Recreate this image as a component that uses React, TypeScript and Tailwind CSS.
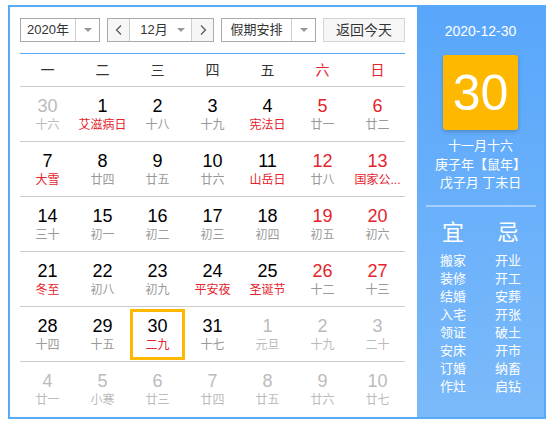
import React from 'react';

type Day = {
    n: number;
    l: string;
    off?: boolean;
    red?: boolean;
};

const rows: Day[][] = [
    [
        { n: 30, l: '十六', off: true },
        { n: 1, l: '艾滋病日', red: true },
        { n: 2, l: '十八' },
        { n: 3, l: '十九' },
        { n: 4, l: '宪法日', red: true },
        { n: 5, l: '廿一' },
        { n: 6, l: '廿二' },
    ],
    [
        { n: 7, l: '大雪', red: true },
        { n: 8, l: '廿四' },
        { n: 9, l: '廿五' },
        { n: 10, l: '廿六' },
        { n: 11, l: '山岳日', red: true },
        { n: 12, l: '廿八' },
        { n: 13, l: '国家公...', red: true },
    ],
    [
        { n: 14, l: '三十' },
        { n: 15, l: '初一' },
        { n: 16, l: '初二' },
        { n: 17, l: '初三' },
        { n: 18, l: '初四' },
        { n: 19, l: '初五' },
        { n: 20, l: '初六' },
    ],
    [
        { n: 21, l: '冬至', red: true },
        { n: 22, l: '初八' },
        { n: 23, l: '初九' },
        { n: 24, l: '平安夜', red: true },
        { n: 25, l: '圣诞节', red: true },
        { n: 26, l: '十二' },
        { n: 27, l: '十三' },
    ],
    [
        { n: 28, l: '十四' },
        { n: 29, l: '十五' },
        { n: 30, l: '二九', red: true },
        { n: 31, l: '十七' },
        { n: 1, l: '元旦', off: true },
        { n: 2, l: '十九', off: true },
        { n: 3, l: '二十', off: true },
    ],
    [
        { n: 4, l: '廿一', off: true },
        { n: 5, l: '小寒', off: true },
        { n: 6, l: '廿三', off: true },
        { n: 7, l: '廿四', off: true },
        { n: 8, l: '廿五', off: true },
        { n: 9, l: '廿六', off: true },
        { n: 10, l: '廿七', off: true },
    ],
];

const weekdays = ['一', '二', '三', '四', '五', '六', '日'];
const yi = ['搬家', '装修', '结婚', '入宅', '领证', '安床', '订婚', '作灶'];
const ji = ['开业', '开工', '安葬', '开张', '破土', '开市', '纳畜', '启钻'];

function Caret() {
    return (
        <span className="h-0 w-0 border-x-[4px] border-t-[4px] border-x-transparent border-t-[#999]" />
    );
}

function Chevron({ left }: { left?: boolean }) {
    return (
        <svg width="8" height="12" viewBox="0 0 8 12" fill="none">
            <polyline
                points={left ? '6,1.5 1.5,6 6,10.5' : '2,1.5 6.5,6 2,10.5'}
                stroke="#555"
                strokeWidth="1.2"
            />
        </svg>
    );
}

interface DayCellProps {
    d: Day;
    weekend: boolean;
    selected: boolean;
}

function DayCell({ d, weekend, selected }: DayCellProps) {
    const numColor = d.off
        ? 'text-[#bbbbbb]'
        : weekend
          ? 'text-[#e5232c]'
          : 'text-black';
    const lunarColor = d.off
        ? 'text-[#bbbbbb]'
        : d.red
          ? 'text-[#e5232c]'
          : 'text-[#999999]';

    return (
        <div className="relative flex flex-col items-center pt-[9px]">
            <span className={`text-[18px] leading-[20px] ${numColor}`}>
                {d.n}
            </span>
            <span
                className={`w-full overflow-hidden whitespace-nowrap px-[2px] text-center text-[12px] leading-[18px] ${lunarColor}`}
            >
                {d.l}
            </span>
            {selected && (
                <div className="absolute inset-x-0 top-[2px] bottom-[1px] border-[3px] border-[#ffb800]" />
            )}
        </div>
    );
}

export default function App() {
    return (
        <div
            className="pt-[5px] pl-[8px]"
            style={{ fontFamily: '"Liberation Sans", "Noto Sans CJK SC", sans-serif' }}
        >
            <div className="flex h-[414px] w-[538px] border-2 border-[#5aa9f7] bg-white">
                {/* left: calendar */}
                <div className="flex w-[407px] flex-col pt-[11px] pl-[10px] pr-[2px]">
                    <div className="flex h-[25px] gap-[7px] text-[13px] text-[#333]">
                        <div className="flex w-[80px] border border-[#aaaaaa]">
                            <span className="flex w-[55px] items-center justify-center border-r border-[#cccccc]">
                                2020年
                            </span>
                            <span className="flex flex-1 items-center justify-center">
                                <Caret />
                            </span>
                        </div>
                        <div className="flex w-[107px] border border-[#aaaaaa]">
                            <span className="flex w-[22px] items-center justify-center border-r border-[#cccccc] bg-[#f6f6f6]">
                                <Chevron left />
                            </span>
                            <span className="flex flex-1 items-center justify-center gap-[9px] pl-[4px]">
                                12月
                                <Caret />
                            </span>
                            <span className="flex w-[22px] items-center justify-center border-l border-[#cccccc] bg-[#f6f6f6]">
                                <Chevron />
                            </span>
                        </div>
                        <div className="flex w-[95px] border border-[#aaaaaa]">
                            <span className="flex w-[70px] items-center justify-center border-r border-[#cccccc]">
                                假期安排
                            </span>
                            <span className="flex flex-1 items-center justify-center">
                                <Caret />
                            </span>
                        </div>
                        <button className="flex w-[82px] items-center justify-center border border-[#d5d5d5] bg-[#f7f7f7] text-[14px] text-[#333]">
                            返回今天
                        </button>
                    </div>

                    <div className="mt-[11px] w-[385px] border-t border-[#5aa9f7]">
                        <div className="grid h-[33px] grid-cols-7 border-b border-[#cccccc] text-[14px]">
                            {weekdays.map((w, i) => (
                                <div
                                    key={w}
                                    className={`flex items-center justify-center ${
                                        i >= 5 ? 'text-[#e5232c]' : 'text-[#333]'
                                    }`}
                                >
                                    {w}
                                </div>
                            ))}
                        </div>
                        {rows.map((row, ri) => (
                            <div
                                key={ri}
                                className={`grid h-[55px] grid-cols-7 ${
                                    ri < rows.length - 1 ? 'border-b border-[#cccccc]' : ''
                                }`}
                            >
                                {row.map((d, ci) => (
                                    <DayCell
                                        key={ci}
                                        d={d}
                                        weekend={ci >= 5}
                                        selected={ri === 4 && ci === 2}
                                    />
                                ))}
                            </div>
                        ))}
                    </div>
                </div>

                {/* right: today panel */}
                <div className="flex flex-1 flex-col items-center bg-gradient-to-b from-[#58a6fb] to-[#7bbafa] text-white">
                    <div className="mt-[15px] text-[14px] leading-[18px]">2020-12-30</div>
                    <div className="mt-[15px] flex h-[75px] w-[75px] items-center justify-center rounded-[3px] bg-[#ffb800] text-[50px] leading-none shadow-[0_2px_4px_rgba(0,0,0,0.2)]">
                        30
                    </div>
                    <div className="mt-[7px] flex flex-col items-center text-[13px] leading-[18.5px]">
                        <span>十一月十六</span>
                        <span>庚子年【鼠年】</span>
                        <span>戊子月 丁未日</span>
                    </div>
                    <div className="mt-[12px] h-[2px] w-[110px] bg-white/40" />
                    <div className="mt-[13px] flex gap-[29px]">
                        <div className="flex flex-col items-center">
                            <span className="text-[22px] leading-[26px]">宜</span>
                            <div className="mt-[6px] flex flex-col items-center text-[13px] leading-[18px]">
                                {yi.map((t) => (
                                    <span key={t}>{t}</span>
                                ))}
                            </div>
                        </div>
                        <div className="flex flex-col items-center">
                            <span className="text-[22px] leading-[26px]">忌</span>
                            <div className="mt-[6px] flex flex-col items-center text-[13px] leading-[18px]">
                                {ji.map((t) => (
                                    <span key={t}>{t}</span>
                                ))}
                            </div>
                        </div>
                    </div>
                </div>
            </div>
        </div>
    );
}
